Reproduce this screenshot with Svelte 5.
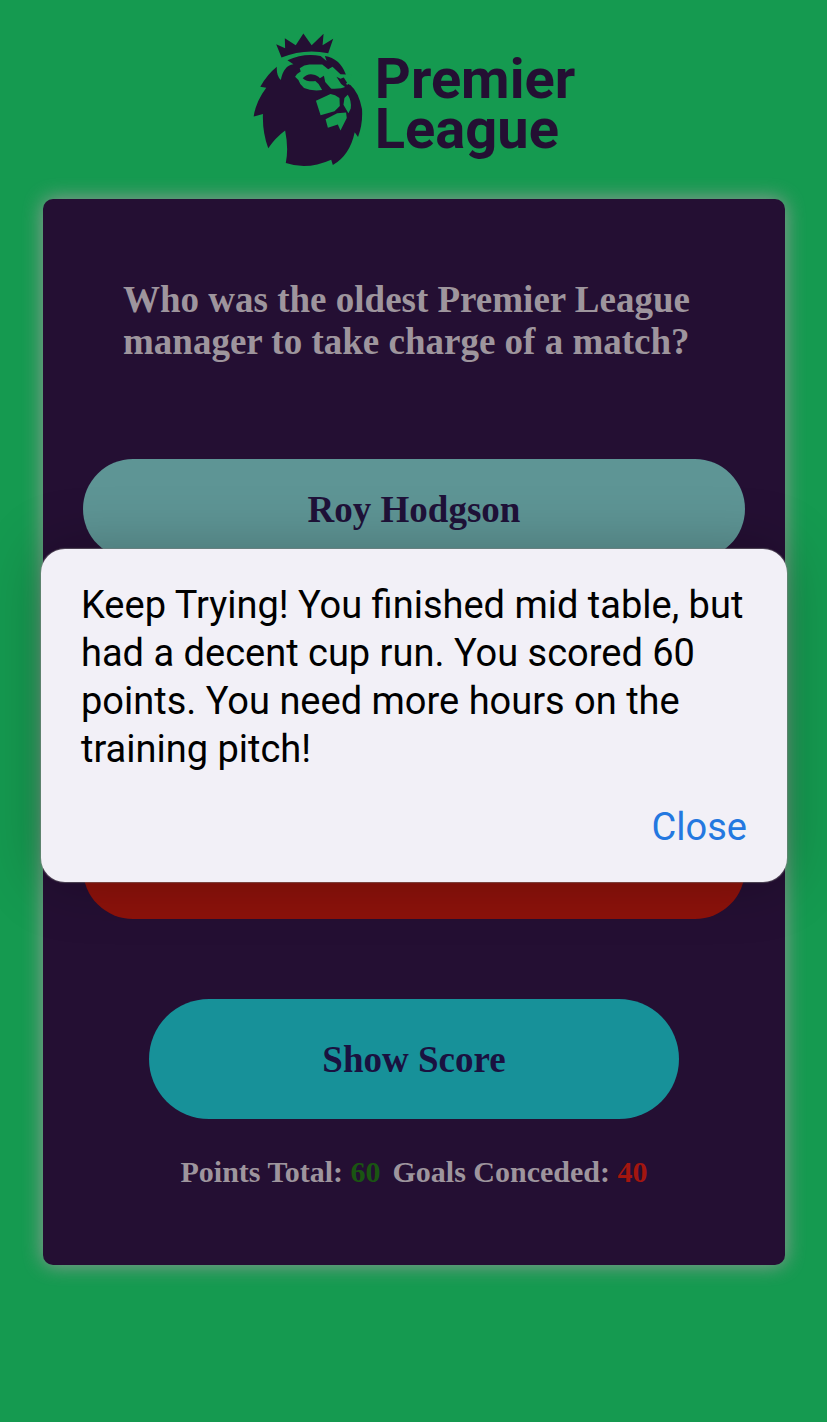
<script>
  const answers = ['Roy Hodgson', '', '', ''];
  const wrong = 3;
  let open = $state(true);
</script>

<div class="page">
  <header class="logo">
    <svg class="lion" viewBox="36 34 332 408" aria-hidden="true">
      <path fill="#240f33" d="M106 70L133 82L132 52L165 73L188 37L213 73L249 38L246 73L278 53L263 97Q190 82 122 110Z" />
      <path fill="#240f33" d="M108 138Q80 160 58 198L76 201Q45 242 38 288L66 280Q64 335 82 384Q103 352 133 330Q144 385 135 428Q200 450 272 418L277 434Q328 405 343 335L353 350Q368 310 365 265Q355 215 330 193L325 190L316 160Q298 112 253 105L258 120L240 105Q190 95 140 118L158 130Q128 134 120 178Q106 165 108 138Z" />
      <path fill="#159a50" d="M163 168Q168 158 180 152L177 142Q190 132 206 131L245 131L263 145L276 138L300 160L318 161L332 160L331 193L324 190L316 198Q300 206 264 203L246 208Q212 212 190 202Q176 190 173 178Z" />
      <path fill="#240f33" d="M186 172Q200 158 216 161Q232 164 238 172L250 165L254 184L274 206L246 210L234 190L224 181Q200 184 186 172ZM288 168L300 174L310 170L320 186L316 190L330 196L318 202L302 190Z" />
      <path fill="#159a50" d="M226 240L270 220Q284 222 297 232L298 256L282 272L240 284ZM312 232L322 222Q334 240 331 264L324 278L309 252ZM255 296L290 278L317 276L319 292L300 330L292 312L262 322Z" />
    </svg>
    <h1>Premier<br />League</h1>
  </header>

  <main class="card">
    <h2>Who was the oldest Premier League manager to take charge of a match?</h2>
    <div class="answers">
      {#each answers as answer, i}
        <button class="answer" class:wrong={i === wrong}>{answer}</button>
      {/each}
    </div>
    <button class="show" onclick={() => (open = true)}>Show Score</button>
    <p class="score">
      <span>Points Total: <b class="points">60</b></span>
      <span>Goals Conceded: <b class="goals">40</b></span>
    </p>
  </main>

  {#if open}
    <div class="overlay">
      <div class="alert" role="alertdialog" aria-modal="true" aria-describedby="message">
        <p id="message">Keep Trying! You finished mid table, but had a decent cup run. You scored 60 points. You need more hours on the training pitch!</p>
        <button class="close" onclick={() => (open = false)}>Close</button>
      </div>
    </div>
  {/if}
</div>

<style>
  :global(body) {
    margin: 0;
    background: #159a50;
  }
  .page {
    position: relative;
    box-sizing: border-box;
    min-height: 100vh;
    padding: 32px 42px 40px 43px;
    font-family: "Liberation Serif", serif;
    font-weight: 700;
  }
  button {
    border: 0;
    padding: 0;
    font: inherit;
    cursor: pointer;
  }
  .logo {
    display: flex;
    justify-content: center;
    gap: 12px;
    height: 136px;
    margin-bottom: 31px;
    color: #240f33;
  }
  .lion {
    width: 110px;
    height: 136px;
  }
  h1 {
    margin: 0;
    padding-top: 22px;
    font: 700 56px/50px Roboto, sans-serif;
  }
  .card {
    display: flex;
    flex-direction: column;
    padding: 80px 40px 72px;
    border-radius: 10px;
    background: #240f33;
    box-shadow: 0 0 20px #9a999a;
    color: #9e959d;
  }
  h2 {
    margin: 0 40px 96px;
    font-size: 37px;
    line-height: 42px;
  }
  .answers {
    display: grid;
    gap: 20px;
    margin-bottom: 80px;
  }
  .answer {
    height: 100px;
    border-radius: 50px;
    background: #5e9595;
    color: #1f1239;
    font-size: 37px;
  }
  .wrong {
    background: #8d120b;
  }
  .show {
    align-self: center;
    width: 80%;
    height: 120px;
    border-radius: 60px;
    background: #179199;
    color: #1a1140;
    font-size: 37px;
  }
  .score {
    display: flex;
    justify-content: center;
    gap: 12px;
    margin: 32px 0 0;
    font-size: 30px;
    line-height: 42px;
    white-space: nowrap;
  }
  .points {
    color: #1a5512;
  }
  .goals {
    color: #a3160f;
  }
  .overlay {
    position: absolute;
    inset: 0;
    display: flex;
    align-items: center;
    padding: 9px 40px 0 41px;
  }
  .alert {
    box-sizing: border-box;
    width: 100%;
    display: flex;
    flex-direction: column;
    align-items: flex-end;
    gap: 30px;
    padding: 32px 40px 31px;
    border-radius: 24px;
    background: #f2f0f7;
    box-shadow: 0 0 1px 1px #80808080, 0 0 60px #00000040;
    font: 400 38px/48px Roboto, sans-serif;
    color: #000;
  }
  .alert p {
    align-self: stretch;
    margin: 0;
  }
  .close {
    background: none;
    color: #2478e0;
  }
</style>
